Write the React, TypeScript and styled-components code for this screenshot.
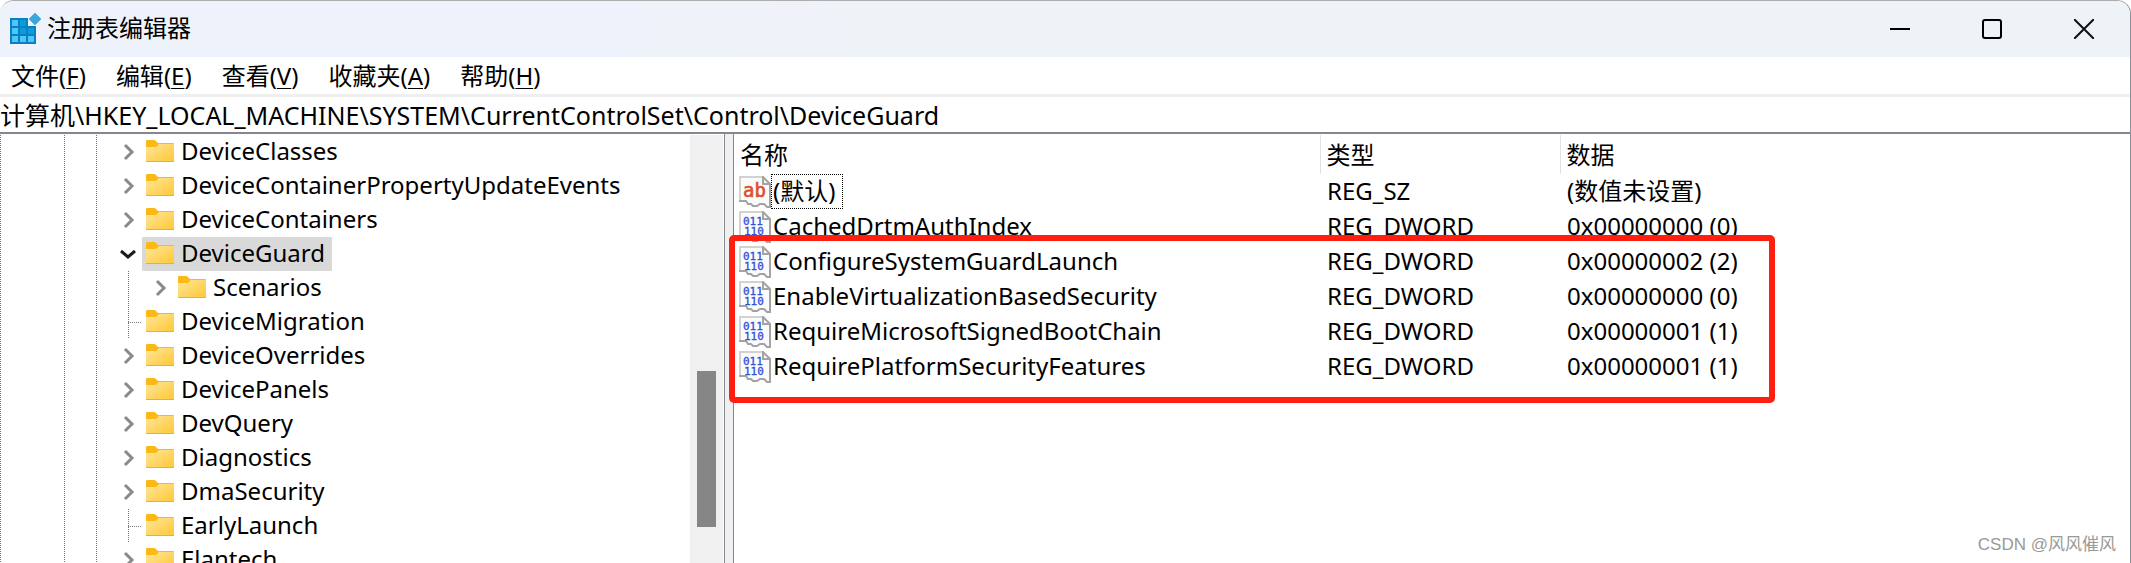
import React from "react";
import styled, { createGlobalStyle, css } from "styled-components";

const GlobalStyle = createGlobalStyle`
  * { box-sizing: border-box; }
  body {
    margin: 0;
    background: #fff;
    color: #000;
    font: 24px/32px "Noto Sans", "Noto Sans CJK SC", sans-serif;
  }
  button, input { font: inherit; color: inherit; }
`;

const Window = styled.div`
  position: relative;
  display: flex;
  flex-direction: column;
  height: 100vh;
  overflow: hidden;
  border-top: 1px solid #adadad;
  border-right: 1px solid #8b9096;
  border-radius: 14px 14px 0 0;
`;

const TitleBar = styled.header`
  display: flex;
  align-items: center;
  flex: none;
  height: 56px;
  padding-left: 10px;
  background: linear-gradient(100deg, #eef2fb 0%, #eef2fa 30%, #eef3f8 40%);
`;

const Title = styled.h1`
  flex: 1;
  margin: 0 0 2px 5px;
  font-size: 24px;
  font-weight: 400;
`;

const CaptionButton = styled.button`
  display: grid;
  place-items: center;
  width: 92px;
  height: 56px;
  padding: 0;
  border: 0;
  background: none;
`;

const MenuBar = styled.nav`
  display: flex;
  flex: none;
  gap: 30px;
  height: 37px;
  padding-left: 11px;
`;

const MenuButton = styled.button`
  padding: 0;
  border: 0;
  background: none;
  line-height: 36px;
  u {
    text-decoration-thickness: 1px;
    text-underline-offset: 3px;
  }
`;

const AddressBar = styled.input`
  flex: none;
  width: 100%;
  height: 40px;
  padding: 0 0 2px;
  border: 0;
  border-top: 3px solid #efefef;
  border-bottom: 2px solid #828790;
  outline: 0;
  background: #fff;
  font-size: 25px;
`;

const Body = styled.main`
  display: grid;
  grid-template-columns: 725px 8px minmax(0, 1fr);
  flex: 1;
  min-height: 0;
`;

const TreePane = styled.section`
  display: flex;
  min-height: 0;
  padding-top: 1px;
  overflow: hidden;
  border-right: 1px solid #828790;
`;

const Tree = styled.ul`
  flex: 1;
  margin: 0;
  padding: 0;
  list-style: none;
`;

const TreeRow = styled.li`
  display: flex;
  height: 34px;
`;

const dots = css`
  background-image: repeating-linear-gradient(to bottom, #777 0 1px, transparent 1px 2px);
  background-repeat: no-repeat;
  background-size: 1px 100%;
`;

const Guide = styled.span<{ $width: number; $blank?: boolean }>`
  flex: none;
  width: ${(p) => p.$width}px;
  ${(p) => !p.$blank && dots}
`;

const Twisty = styled.button`
  display: grid;
  place-items: center;
  flex: none;
  width: 26px;
  padding: 0;
  border: 0;
  background: none;
`;

const TreeLabel = styled.span<{ $selected?: boolean }>`
  display: flex;
  align-items: center;
  gap: 7px;
  height: 34px;
  padding: 0 7px 2px 4px;
  border-radius: 1px;
  white-space: nowrap;
  background: ${(p) => (p.$selected ? "#d9d9d9" : "transparent")};
`;

const ScrollTrack = styled.div`
  flex: none;
  width: 33px;
  margin-right: 1px;
  padding: 236px 7px 0;
  background: #f0f0f0;
`;

const ScrollThumb = styled.div`
  height: 156px;
  background: #868686;
`;

const Splitter = styled.div`
  background: #f0f0f0;
`;

const ListPane = styled.section`
  position: relative;
  border-left: 1px solid #828790;
  padding-top: 1px;
`;

const Table = styled.table`
  width: 100%;
  border-collapse: collapse;
  table-layout: fixed;
`;

const HeadCell = styled.th<{ $width?: number }>`
  width: ${(p) => (p.$width ? `${p.$width}px` : "auto")};
  height: 39px;
  padding: 0 6px;
  border-right: ${(p) => (p.$width ? "1px solid #e2e2e2" : "0")};
  font-weight: 400;
  text-align: left;
`;

const Cell = styled.td`
  height: 35px;
  padding: 0 7px 1px;
`;

const NameCell = styled(Cell)`
  padding: 0 5px;
`;

const Name = styled.div`
  display: flex;
  align-items: center;
  height: 35px;
`;

const NameText = styled.span<{ $focused?: boolean }>`
  padding: 0 7px 1px 1px;
  border: 1px ${(p) => (p.$focused ? "dotted #000" : "solid transparent")};
`;

const Highlight = styled.div`
  position: absolute;
  top: 101px;
  left: -5px;
  width: 1046px;
  height: 168px;
  border: 6px solid #ff1e10;
  border-radius: 5px;
  pointer-events: none;
`;

const Watermark = styled.div`
  position: absolute;
  right: 14px;
  bottom: 5px;
  color: #999;
  font: 17px/26px "Liberation Sans", "Noto Sans CJK SC", sans-serif;
`;

const AppIcon = () => (
  <svg width="32" height="34" viewBox="0 0 32 34" aria-hidden="true">
    <path d="M0 6h18v8h8v18H0z" fill="#0a7fc2" />
    <path d="M2 8h6v6H2zM2 16h6v6H2zM2 24h6v6H2zM10 24h6v6h-6zM18 24h6v6h-6z" fill="#4cc8f8" />
    <path d="M10 8h6v6h-6zM10 16h6v6h-6zM18 16h6v6h-6z" fill="#0a9bdb" />
    <path d="M25 1l6 6-6 6-6-6z" fill="#39a7dd" stroke="#5cb4dc" />
  </svg>
);

const Folder = () => (
  <svg width="28" height="22" viewBox="0 0 28 22" aria-hidden="true">
    <defs>
      <linearGradient id="folder" x1="0" y1="0" x2="1" y2="1">
        <stop offset="0" stopColor="#ffe69c" />
        <stop offset="1" stopColor="#ffc833" />
      </linearGradient>
    </defs>
    <path d="M0 1q0-1 1-1h7q1 0 2 1l2 2h15q1 0 1 1v4H0z" fill="#fbb917" />
    <path d="M0 7h9q2 0 3-2l1-1h15v17q0 1-1 1H1q-1 0-1-1z" fill="url(#folder)" />
    <path d="M0 21.5h28" stroke="#eeb02a" />
  </svg>
);

const ChevronRight = () => (
  <svg width="12" height="18" viewBox="0 0 12 18" aria-hidden="true">
    <path d="M2 2l7 7-7 7" fill="none" stroke="#8a8a8a" strokeWidth="3" />
  </svg>
);

const ChevronDown = () => (
  <svg width="18" height="12" viewBox="0 0 18 12" aria-hidden="true">
    <path d="M1 3l7 6 7-6" fill="none" stroke="#1c1c1c" strokeWidth="3" />
  </svg>
);

const ValueIcon = ({ binary }: { binary: boolean }) => (
  <svg width="32" height="32" viewBox="0 0 32 32" aria-hidden="true">
    <path d="M1 1h23l7 7v23h-3l-4-3h-3l-3 2h-5l-5-5H1z" fill="#fbfbfb" />
    <path d="M1 25V1h23" fill="none" stroke="#d2d2d2" strokeWidth="2" />
    <path d="M0 25h7l2 3h3l2 2h4l3-2h4l3 3h3V8l-7-7v7h7" fill="none" stroke="#a3a3a3" strokeWidth="2" />
    {binary ? (
      <g fill="#2f52d8" stroke="#2f52d8" strokeWidth="0.3" fontFamily="DejaVu Sans Mono, monospace" fontSize="11">
        <text x="4" y="14">011</text>
        <text x="5" y="24">110</text>
      </g>
    ) : (
      <text x="4" y="21" fill="#dc4f2c" stroke="#dc4f2c" strokeWidth="0.6" fontFamily="DejaVu Sans Mono, monospace" fontSize="19">
        ab
      </text>
    )}
  </svg>
);

const menus = [
  ["文件", "F"],
  ["编辑", "E"],
  ["查看", "V"],
  ["收藏夹", "A"],
  ["帮助", "H"],
];

type Node = { name: string; state?: "leaf" | "open"; child?: boolean };

const nodes: Node[] = [
  { name: "DeviceClasses" },
  { name: "DeviceContainerPropertyUpdateEvents" },
  { name: "DeviceContainers" },
  { name: "DeviceGuard", state: "open" },
  { name: "Scenarios", child: true },
  { name: "DeviceMigration", state: "leaf" },
  { name: "DeviceOverrides" },
  { name: "DevicePanels" },
  { name: "DevQuery" },
  { name: "Diagnostics" },
  { name: "DmaSecurity" },
  { name: "EarlyLaunch", state: "leaf" },
  { name: "Elantech" },
];

const values = [
  ["(默认)", "REG_SZ", "(数值未设置)"],
  ["CachedDrtmAuthIndex", "REG_DWORD", "0x00000000 (0)"],
  ["ConfigureSystemGuardLaunch", "REG_DWORD", "0x00000002 (2)"],
  ["EnableVirtualizationBasedSecurity", "REG_DWORD", "0x00000000 (0)"],
  ["RequireMicrosoftSignedBootChain", "REG_DWORD", "0x00000001 (1)"],
  ["RequirePlatformSecurityFeatures", "REG_DWORD", "0x00000001 (1)"],
];

const LeafSlot = styled.span`
  display: flex;
  flex: none;
  width: 26px;
  padding-left: 12px;
`;

const Branch = styled.span`
  width: 14px;
  background:
    repeating-linear-gradient(to bottom, #777 0 1px, transparent 1px 2px) 0 0 / 1px 100% no-repeat,
    repeating-linear-gradient(to right, #777 0 1px, transparent 1px 2px) 0 17px / 100% 1px no-repeat;
`;

const TreeItem = ({ node }: { node: Node }) => (
  <TreeRow>
    <Guide $width={64} />
    <Guide $width={32} />
    <Guide $width={20} />
    {node.child && (
      <>
        <Guide $width={12} $blank />
        <Guide $width={20} />
      </>
    )}
    {node.state === "leaf" ? (
      <LeafSlot>
        <Branch />
      </LeafSlot>
    ) : (
      <Twisty aria-label={`${node.state === "open" ? "折叠" : "展开"} ${node.name}`}>
        {node.state === "open" ? <ChevronDown /> : <ChevronRight />}
      </Twisty>
    )}
    <TreeLabel $selected={node.state === "open"}>
      <Folder />
      {node.name}
    </TreeLabel>
  </TreeRow>
);

export default function App() {
  return (
    <>
      <GlobalStyle />
      <Window>
        <TitleBar>
          <AppIcon />
          <Title>注册表编辑器</Title>
          <CaptionButton aria-label="最小化">
            <svg width="20" height="20"><path d="M0 10h20" stroke="#000" strokeWidth="2" /></svg>
          </CaptionButton>
          <CaptionButton aria-label="最大化">
            <svg width="20" height="20"><rect x="1" y="1" width="18" height="18" rx="2" fill="none" stroke="#000" strokeWidth="2" /></svg>
          </CaptionButton>
          <CaptionButton aria-label="关闭">
            <svg width="20" height="20"><path d="M0 0l20 20M20 0L0 20" stroke="#111" strokeWidth="2" /></svg>
          </CaptionButton>
        </TitleBar>
        <MenuBar>
          {menus.map(([label, key]) => (
            <MenuButton key={key}>
              {label}(<u>{key}</u>)
            </MenuButton>
          ))}
        </MenuBar>
        <AddressBar
          aria-label="地址"
          defaultValue="计算机\HKEY_LOCAL_MACHINE\SYSTEM\CurrentControlSet\Control\DeviceGuard"
        />
        <Body>
          <TreePane>
            <Tree>
              {nodes.map((node) => (
                <TreeItem key={node.name} node={node} />
              ))}
            </Tree>
            <ScrollTrack>
              <ScrollThumb />
            </ScrollTrack>
          </TreePane>
          <Splitter />
          <ListPane>
            <Table>
              <thead>
                <tr>
                  <HeadCell $width={586}>名称</HeadCell>
                  <HeadCell $width={240}>类型</HeadCell>
                  <HeadCell>数据</HeadCell>
                </tr>
              </thead>
              <tbody>
                {values.map(([name, type, data], i) => (
                  <tr key={name}>
                    <NameCell>
                      <Name>
                        <ValueIcon binary={type === "REG_DWORD"} />
                        <NameText $focused={i === 0}>{name}</NameText>
                      </Name>
                    </NameCell>
                    <Cell>{type}</Cell>
                    <Cell>{data}</Cell>
                  </tr>
                ))}
              </tbody>
            </Table>
            <Highlight />
          </ListPane>
        </Body>
        <Watermark>CSDN @风风催风</Watermark>
      </Window>
    </>
  );
}
